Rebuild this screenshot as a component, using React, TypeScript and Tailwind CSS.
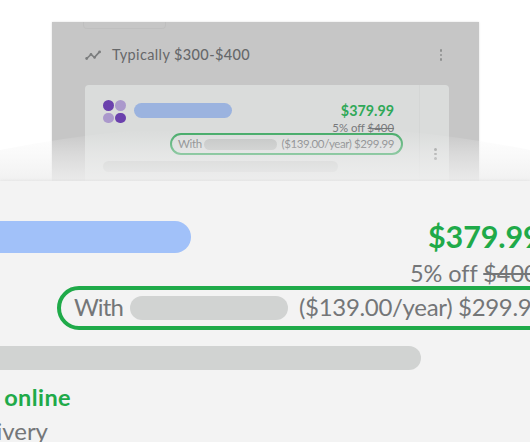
import React from 'react';

const MoreDots = ({ className }: { className: string }) => (
  <div className={`flex flex-col gap-[2px] ${className}`}>
    <span className="size-[2.5px] rounded-full bg-[#8f9190]" />
    <span className="size-[2.5px] rounded-full bg-[#8f9190]" />
    <span className="size-[2.5px] rounded-full bg-[#8f9190]" />
  </div>
);

const TrendIcon = () => (
  <svg width="17" height="12" viewBox="0 0 17 12" fill="none" stroke="#7b7d7e" strokeWidth="1.6">
    <path d="M1.7 9.5 6 5.5 9.5 8.3 14.5 2.9" />
    <g fill="#7b7d7e" stroke="none">
      <circle cx="1.7" cy="9.5" r="1.4" />
      <circle cx="6" cy="5.3" r="1.3" />
      <circle cx="9.6" cy="8.4" r="1.3" />
      <circle cx="14.6" cy="2.9" r="1.4" />
    </g>
  </svg>
);

const StoreLogo = () => (
  <div className="grid grid-cols-2 gap-[2px] w-[22px]">
    <span className="size-[10.5px] rounded-full bg-[#6b41ad]" />
    <span className="size-[10.5px] rounded-full bg-[#ab99cc]" />
    <span className="size-[10.5px] rounded-full bg-[#ab99cc]" />
    <span className="size-[10.5px] rounded-full bg-[#6b41ad]" />
  </div>
);

const Preview = () => (
  <section className="relative h-[181px] bg-white pt-[22px] overflow-hidden">
    <div className="ml-[52px] w-[427px] h-[159px] bg-[#c6c6c6] pl-[33px] pr-[30px] shadow-[0_0_2px_#ddd]">
      <div className="-ml-[2px] w-[83px] h-[7px] rounded-b-[4px] border border-t-0 border-[#bfbfbf]" />
      <div className="flex items-center h-[52px]">
        <TrendIcon />
        <span className="ml-[10px] text-[14.5px] text-[#66686a] tracking-[0.38px] whitespace-nowrap">
          Typically <span className="font-medium">$300-$400</span>
        </span>
        <MoreDots className="ml-auto mr-[7px]" />
      </div>
      <div className="mt-[4px] flex h-[110px] rounded-t-[4px] bg-[#dadcdb]">
        <div className="w-[335px] pl-[18px] border-r border-[#d4d6d5]">
          <div className="flex h-[37px] pt-[15px] pr-[25px]">
            <StoreLogo />
            <div className="ml-[9px] mt-[3px] w-[98px] h-[15px] rounded-full bg-[#9bb3df]" />
            <span className="ml-auto mt-[3px] text-[14.3px] leading-[16px] font-bold text-[#2fa858]">$379.99</span>
          </div>
          <div className="h-[11px] pr-[25px] text-right text-[11.4px] leading-[12px] text-[#77797b]">
            5% off <s>$400</s>
          </div>
          <div className="ml-[67px] w-[233px] h-[22px] rounded-full border-2 border-[#3fa863] flex items-center pl-[6px] pr-[7px] text-[11.5px] leading-[14px] text-[#77797b] whitespace-nowrap">
            <span className="w-[23px] tracking-[-0.3px]">With</span>
            <span className="ml-[3px] w-[73px] h-[11px] shrink-0 rounded-full bg-[#c1c3c2]" />
            <span className="ml-auto tracking-[-0.4px]">($139.00/year) $299.99</span>
          </div>
          <div className="mt-[6px] w-[235px] h-[11px] rounded-full bg-[#c6c8c7]" />
        </div>
        <MoreDots className="ml-[14px] mt-[63px]" />
      </div>
    </div>
    <svg className="absolute inset-0" width="530" height="181" viewBox="0 0 530 181">
      <defs>
        <linearGradient id="haze" gradientUnits="userSpaceOnUse" x1="0" y1="130" x2="0" y2="181">
          <stop offset="0" stopColor="#f3f3f3" stopOpacity="0" />
          <stop offset="0.45" stopColor="#f3f3f3" stopOpacity="0.42" />
          <stop offset="1" stopColor="#efefef" stopOpacity="0.88" />
        </linearGradient>
      </defs>
      <path d="M0 150Q265 98 530 150V181H0Z" fill="url(#haze)" />
    </svg>
  </section>
);

const Closeup = () => (
  <section className="h-[261px] bg-[#f3f3f3] overflow-hidden text-[#747678] shadow-[0_0_3px_#ddd] relative">
    <div className="flex h-[81px] pt-[40px]">
      <div className="w-[191px] h-[31.5px] shrink-0 rounded-r-full bg-[#a1c1f9]" />
      <span className="ml-[237px] text-[30.5px] leading-[30px] font-bold tracking-[-0.1px] text-[#1faa49]">$379.99</span>
    </div>
    <div className="h-[24px] pl-[410px] text-[23.5px] leading-[22px] tracking-[-0.05px] whitespace-nowrap">
      5% off <s>$400</s>
    </div>
    <div className="ml-[57px] w-[500px] h-[44px] rounded-full border-4 border-[#1faa49] flex items-center pl-[13px] text-[24px] leading-[28px] whitespace-nowrap">
      <span className="w-[49px] -mt-[2px] tracking-[-0.9px]">With</span>
      <span className="ml-[7px] w-[158px] h-[24px] shrink-0 rounded-full bg-[#d1d3d2]" />
      <span className="ml-[11px] -mt-[2px] tracking-[-0.32px]">($139.00/year) $299.99</span>
    </div>
    <div className="mt-[16px] w-[421px] h-[24px] rounded-r-full bg-[#d1d3d2]" />
    <div className="mt-[12px] w-[71px] flex justify-end text-[23.5px] leading-[30px] font-bold tracking-[0.4px] text-[#1faa49] whitespace-nowrap">
      online
    </div>
    <div className="mt-[4px] w-[48px] flex justify-end text-[24px] leading-[30px] whitespace-nowrap">Delivery</div>
  </section>
);

const App = () => {
  return (
    <main className="w-[530px] h-[442px] overflow-hidden font-['Lato',sans-serif]">
      <Preview />
      <Closeup />
    </main>
  );
};

export default App;
